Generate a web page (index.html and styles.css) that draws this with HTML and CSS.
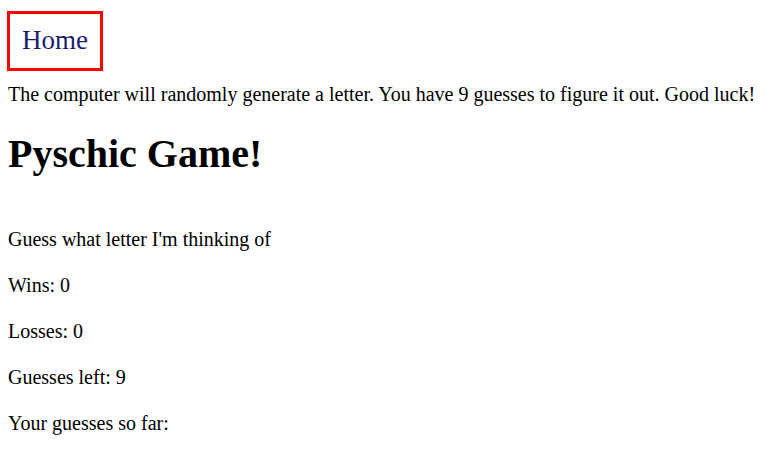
FILE: index.html
```html
<!DOCTYPE html>
<html>
<head>
<meta charset="utf-8">
<title>Psychic Game</title>
<link rel="stylesheet" href="styles.css">
</head>
<body>
<nav class="nav"><a class="home" href="#">Home</a></nav>
<p class="intro">The computer will randomly generate a letter. You have 9 guesses to figure it out. Good luck!</p>
<h1 class="title">Pyschic Game!</h1>
<p class="line first">Guess what letter I'm thinking of</p>
<p class="line">Wins: 0</p>
<p class="line">Losses: 0</p>
<p class="line">Guesses left: 9</p>
<p class="line">Your guesses so far: </p>
</body>
</html>
```
FILE: styles.css
```css
body {
  margin: 0;
  padding: 11px 8px 0 8px;
  font-family: "Liberation Serif", "Times New Roman", serif;
  font-size: 20px;
  color: #000;
  background: #fff;
}
.nav {
  margin-left: -1px;
}
.home {
  display: inline-block;
  border: 3px solid #f00;
  padding: 10.5px 12px 12.5px 12px;
  font-size: 27px;
  color: #1c1c6e;
  text-decoration: none;
}
.intro {
  margin: 12px 0 0 0;
}
.title {
  font-size: 2em;
  line-height: 46px;
  margin: 25px 0 0 0;
}
.line {
  line-height: 26px;
  margin: 20px 0;
}
.line.first {
  margin-top: 49px;
}
```
